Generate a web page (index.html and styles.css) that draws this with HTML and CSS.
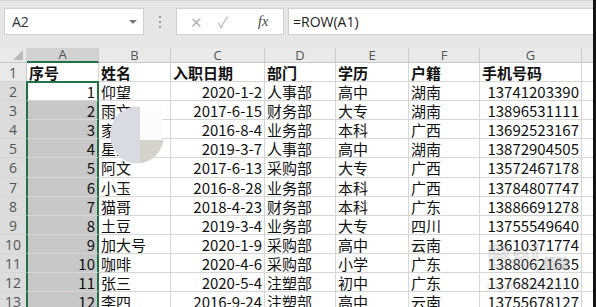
FILE: index.html
```html
<!DOCTYPE html>
<html lang="zh-CN">

<head>
    <meta charset="UTF-8">
    <meta name="viewport" content="width=device-width, initial-scale=1.0">
    <title>ROW</title>
    <link rel="stylesheet" href="styles.css">
</head>

<body>
    <div class="window">
        <div class="toolbar">
            <div class="namebox">
                <span>A2</span>
                <span class="caret"></span>
            </div>
            <div class="grip"><i></i><i></i><i></i></div>
            <div class="fxbtns">
                <span class="btn">✕</span>
                <span class="btn">✓</span>
                <span class="fx">fx</span>
            </div>
            <div class="formula">=ROW(A1)</div>
        </div>

        <div class="sheet">
            <div class="row head">
                <div class="corner"><span class="tri"></span></div>
                <div class="col sel">A</div>
                <div class="col">B</div>
                <div class="col">C</div>
                <div class="col">D</div>
                <div class="col">E</div>
                <div class="col">F</div>
                <div class="col">G</div>
                <div class="col last"></div>
            </div>

            <div class="row">
                <div class="num">1</div>
                <div class="c b">序号</div>
                <div class="c b">姓名</div>
                <div class="c b">入职日期</div>
                <div class="c b">部门</div>
                <div class="c b">学历</div>
                <div class="c b">户籍</div>
                <div class="c b">手机号码</div>
                <div class="c last"></div>
            </div>
            <div class="row">
                <div class="num hi">2</div>
                <div class="c r a active">1</div>
                <div class="c">仰望</div>
                <div class="c r">2020-1-2</div>
                <div class="c">人事部</div>
                <div class="c">高中</div>
                <div class="c">湖南</div>
                <div class="c r">13741203390</div>
                <div class="c last"></div>
            </div>
            <div class="row">
                <div class="num hi">3</div>
                <div class="c r a">2</div>
                <div class="c">雨文</div>
                <div class="c r">2017-6-15</div>
                <div class="c">财务部</div>
                <div class="c">大专</div>
                <div class="c">湖南</div>
                <div class="c r">13896531111</div>
                <div class="c last"></div>
            </div>
            <div class="row">
                <div class="num hi">4</div>
                <div class="c r a">3</div>
                <div class="c">家豪</div>
                <div class="c r">2016-8-4</div>
                <div class="c">业务部</div>
                <div class="c">本科</div>
                <div class="c">广西</div>
                <div class="c r">13692523167</div>
                <div class="c last"></div>
            </div>
            <div class="row">
                <div class="num hi">5</div>
                <div class="c r a">4</div>
                <div class="c">星星</div>
                <div class="c r">2019-3-7</div>
                <div class="c">人事部</div>
                <div class="c">高中</div>
                <div class="c">湖南</div>
                <div class="c r">13872904505</div>
                <div class="c last"></div>
            </div>
            <div class="row">
                <div class="num hi">6</div>
                <div class="c r a">5</div>
                <div class="c">阿文</div>
                <div class="c r">2017-6-13</div>
                <div class="c">采购部</div>
                <div class="c">大专</div>
                <div class="c">广西</div>
                <div class="c r">13572467178</div>
                <div class="c last"></div>
            </div>
            <div class="row">
                <div class="num hi">7</div>
                <div class="c r a">6</div>
                <div class="c">小玉</div>
                <div class="c r">2016-8-28</div>
                <div class="c">业务部</div>
                <div class="c">本科</div>
                <div class="c">广西</div>
                <div class="c r">13784807747</div>
                <div class="c last"></div>
            </div>
            <div class="row">
                <div class="num hi">8</div>
                <div class="c r a">7</div>
                <div class="c">猫哥</div>
                <div class="c r">2018-4-23</div>
                <div class="c">财务部</div>
                <div class="c">本科</div>
                <div class="c">广东</div>
                <div class="c r">13886691278</div>
                <div class="c last"></div>
            </div>
            <div class="row">
                <div class="num hi">9</div>
                <div class="c r a">8</div>
                <div class="c">土豆</div>
                <div class="c r">2019-3-4</div>
                <div class="c">业务部</div>
                <div class="c">大专</div>
                <div class="c">四川</div>
                <div class="c r">13755549640</div>
                <div class="c last"></div>
            </div>
            <div class="row">
                <div class="num hi">10</div>
                <div class="c r a">9</div>
                <div class="c">加大号</div>
                <div class="c r">2020-1-9</div>
                <div class="c">采购部</div>
                <div class="c">高中</div>
                <div class="c">云南</div>
                <div class="c r">13610371774</div>
                <div class="c last"></div>
            </div>
            <div class="row">
                <div class="num hi">11</div>
                <div class="c r a">10</div>
                <div class="c">咖啡</div>
                <div class="c r">2020-4-6</div>
                <div class="c">采购部</div>
                <div class="c">小学</div>
                <div class="c">广东</div>
                <div class="c r">13880621635</div>
                <div class="c last"></div>
            </div>
            <div class="row">
                <div class="num hi">12</div>
                <div class="c r a">11</div>
                <div class="c">张三</div>
                <div class="c r">2020-5-4</div>
                <div class="c">注塑部</div>
                <div class="c">初中</div>
                <div class="c">广东</div>
                <div class="c r">13768242110</div>
                <div class="c last"></div>
            </div>
            <div class="row">
                <div class="num hi">13</div>
                <div class="c r a">12</div>
                <div class="c">李四</div>
                <div class="c r">2016-9-24</div>
                <div class="c">注塑部</div>
                <div class="c">高中</div>
                <div class="c">云南</div>
                <div class="c r">13755678127</div>
                <div class="c last"></div>
            </div>

            <!-- loading spinner frozen over the sheet -->
            <svg class="spinner" width="56" height="58" viewBox="0 0 56 58">
                <defs>
                    <clipPath id="disc">
                        <ellipse cx="27" cy="29" rx="27" ry="28.5"></ellipse>
                    </clipPath>
                </defs>
                <g clip-path="url(#disc)">
                    <rect x="0" y="0" width="30" height="58" fill="#d8dbe2"></rect>
                    <rect x="30" y="34" width="26" height="24" fill="#d5d2c9"></rect>
                </g>
                <rect x="30" y="0" width="22" height="34" fill="#fcfcfc"></rect>
            </svg>

            <div class="watermark">
                <div class="wm-big">Bai<span>经验</span></div>
                <div class="wm-small">jingyan.baidu.com</div>
            </div>
        </div>
    </div>
</body>
</html>
```

FILE: styles.css
```css
body {
    margin: 0;
    padding: 0;
    overflow: hidden;
    background: #fff;
    font-family: "Noto Sans CJK SC", "Noto Sans", sans-serif;
    color: #111;
}

.window {
    width: 596px;
    height: 307px;
    box-sizing: border-box;
    border-right: 3px solid #141414;
    overflow: hidden;
}

/* formula bar */
.toolbar {
    height: 48px;
    box-sizing: border-box;
    background: #e6e6e6;
    border-top: 1px solid #d6d6d6;
    padding: 7px 0 0 4px;
    display: flex;
    align-items: flex-start;
}

.namebox {
    width: 140px;
    height: 27px;
    box-sizing: border-box;
    background: #fff;
    border: 1px solid #cfcfcf;
    display: flex;
    align-items: center;
    justify-content: space-between;
    padding: 0 6px 0 7px;
    font-family: "Open Sans", "Noto Sans", sans-serif;
    font-size: 14px;
    color: #333;
}

.caret {
    width: 0;
    height: 0;
    border-left: 4px solid transparent;
    border-right: 4px solid transparent;
    border-top: 4px solid #7a7a7a;
}

.grip {
    width: 32px;
    height: 27px;
    display: flex;
    flex-direction: column;
    align-items: center;
    justify-content: center;
    gap: 3px;
}

.grip i {
    width: 2px;
    height: 2px;
    background: #9a9a9a;
}

.fxbtns {
    width: 108px;
    height: 27px;
    box-sizing: border-box;
    background: #fff;
    border: 1px solid #cfcfcf;
    display: flex;
    align-items: center;
    padding-left: 13px;
}

.btn {
    width: 28px;
    font-size: 15px;
    color: #b4b4b4;
}

.fx {
    margin-left: 12px;
    font-family: "Liberation Serif", serif;
    font-style: italic;
    font-size: 14px;
    color: #444;
}

.formula {
    flex: 1;
    height: 27px;
    margin-left: 4px;
    box-sizing: border-box;
    background: #fff;
    border: 1px solid #cfcfcf;
    border-right: none;
    padding-left: 4px;
    line-height: 25px;
    font-family: "Open Sans", "Noto Sans", sans-serif;
    font-size: 14px;
    color: #222;
}

/* grid */
.sheet {
    position: relative;
}

.row {
    display: grid;
    grid-template-columns: 27px 72px 72px 94px 71px 73px 71px 102px 11px;
    height: 19.1px;
}

.row.head {
    height: 15px;
    background: #e9e9e9;
}

.row > div {
    box-sizing: border-box;
    border-right: 1px solid #d6d6d6;
    border-bottom: 1px solid #d6d6d6;
    white-space: nowrap;
    overflow: hidden;
}

.corner {
    position: relative;
    background: #e9e9e9;
    border-bottom: 1px solid #c8c8c8 !important;
}

.tri {
    position: absolute;
    right: 3px;
    bottom: 2px;
    width: 0;
    height: 0;
    border-left: 10px solid transparent;
    border-bottom: 10px solid #b9b9b9;
}

.row > .col {
    overflow: visible;
    text-align: center;
    font-family: "Open Sans", "Noto Sans", sans-serif;
    font-size: 13px;
    line-height: 14px;
    color: #555;
    border-right-color: #cbcbcb;
    border-bottom-color: #c8c8c8;
}

.row > .col.sel {
    background: #d2d2d2;
    border-bottom: 2px solid #217346;
    line-height: 13px;
}

.col.last {
    border-right: none !important;
}

.num {
    text-align: center;
    font-family: "Open Sans", "Noto Sans", sans-serif;
    font-size: 14px;
    line-height: 19px;
    color: #555;
    background: #e9e9e9;
    border-right-color: #c8c8c8 !important;
}

.num.hi {
    background: #dcdcdc;
}

.c {
    padding: 0 2px;
    font-size: 15px;
    line-height: 19px;
}

.c.r {
    text-align: right;
}

.c.b {
    font-weight: 700;
}

.c.last {
    border-right: none !important;
}

/* selected range A2:A13 */
.c.a {
    background: #c8c8c8;
    border-left: 2px solid #217346;
    border-right: 2px solid #217346;
    margin-left: -1px;
}

.row > .c.a.active {
    overflow: visible;
    background: #fff;
    border-top: 2px solid #217346;
    margin-top: -1px;
    line-height: 17px;
}

.spinner {
    position: absolute;
    left: 110px;
    top: 58px;
}

.watermark {
    position: absolute;
    left: 487px;
    top: 190px;
    color: rgba(150, 150, 150, 0.18);
    font-family: "Liberation Sans", sans-serif;
}

.wm-big {
    font-size: 34px;
    font-weight: 700;
    line-height: 36px;
    -webkit-text-stroke: 1px rgba(160, 160, 160, 0.35);
}

.wm-big span {
    font-family: "Noto Sans CJK SC", sans-serif;
    font-size: 13px;
    margin-left: 3px;
}

.wm-small {
    font-size: 10px;
    line-height: 12px;
    color: rgba(150, 150, 150, 0.35);
}
```
